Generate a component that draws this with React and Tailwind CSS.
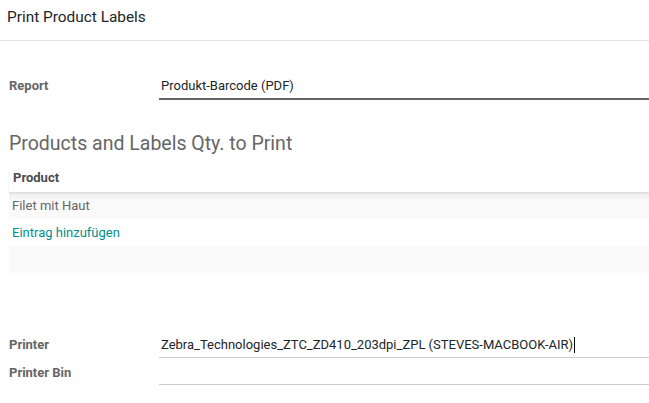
import React from 'react';

export default function App() {
  return (
    <div className="w-[649px] h-[403px] bg-white overflow-hidden font-['Roboto',sans-serif] text-[#212529]">
      {/* Header */}
      <div className="h-[41px] border-b border-[#dee2e6] px-[7px] flex items-center">
        <h4 className="text-[15.4px] leading-none text-[#212529] -mt-[5px]">Print Product Labels</h4>
      </div>

      <div className="pl-[9px]">
        {/* Report field */}
        <div className="flex mt-[33px] h-[26px]">
          <div className="w-[150px] flex items-center text-[13px] font-bold text-[#666] mb-[2px]">Report</div>
          <div className="flex-1 border-b-2 border-[#666] flex items-center text-[13px] text-[#212529] pl-[2px]">
            Produkt-Barcode (PDF)
          </div>
        </div>

        {/* Section heading */}
        <div className="mt-[34px] h-[20px] flex items-center text-[19.5px] leading-none text-[#666]">
          Products and Labels Qty. to Print
        </div>

        {/* Table */}
        <div className="mt-[14px]">
          <div className="h-[24px] flex items-center px-[4px] pb-[4px] text-[13px] font-bold text-[#4c4c4c] shadow-[0_1px_2px_rgba(0,0,0,0.1)] relative z-10">
            Product
          </div>
          <div className="h-[27px] flex items-center px-[3px] text-[13px] text-[#666] bg-[#fafafa] bg-gradient-to-b from-[#ececf0] to-[#fafafa] bg-[length:100%_9px] bg-no-repeat">
            Filet mit Haut
          </div>
          <div className="h-[27px] flex items-center px-[3px] text-[13px] text-[#008f8c]">
            Eintrag hinzufügen
          </div>
          <div className="h-[27px] bg-[#fafafa]"></div>
        </div>

        {/* Printer fields */}
        <div className="mt-[60px]">
          <div className="flex h-[25px]">
            <div className="w-[150px] flex items-center text-[13px] font-bold text-[#666] mb-[2px]">Printer</div>
            <div className="flex-1 border-b border-[#ccc] flex items-center text-[13px] text-[#212529] pl-[2px]">
              Zebra_Technologies_ZTC_ZD410_203dpi_ZPL (STEVES-MACBOOK-AIR)
              <span className="inline-block w-px h-[16px] bg-black ml-[1px]"></span>
            </div>
          </div>
          <div className="flex h-[27px]">
            <div className="w-[150px] flex items-center text-[13px] font-bold text-[#666] pt-[2px]">Printer Bin</div>
            <div className="flex-1 border-b border-[#ccc]"></div>
          </div>
        </div>
      </div>
    </div>
  );
}
